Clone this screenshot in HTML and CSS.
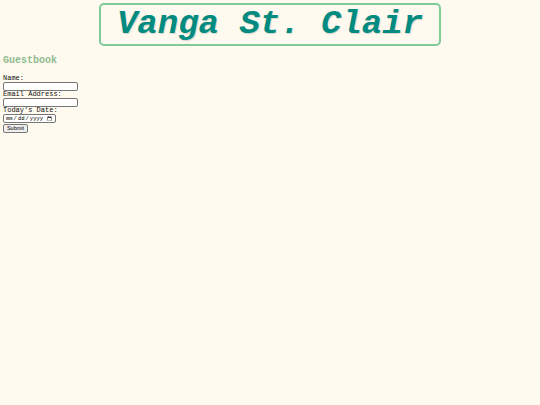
FILE: index.html
```html
<!DOCTYPE html>
<html>
<head>
<meta charset="utf-8">
<link rel="stylesheet" href="styles.css">
</head>
<body>
<header class="banner">
  <h1 class="title">Vanga St. Clair</h1>
</header>
<main class="content">
  <h2 class="heading">Guestbook</h2>
  <form class="form">
    <label class="label" for="name">Name:</label>
    <input class="field" id="name" type="text">
    <label class="label" for="email">Email Address:</label>
    <input class="field" id="email" type="text">
    <label class="label" for="date">Today's Date:</label>
    <input class="date" id="date" type="date">
    <button class="submit" type="submit">Submit</button>
  </form>
</main>
</body>
</html>
```
FILE: styles.css
```css
html, body {
  margin: 0;
  padding: 0;
  background: #fffaf0;
}
body {
  font-family: "Liberation Mono", monospace;
  padding: 3px;
}
.banner {
  display: flex;
  justify-content: center;
}
.title {
  margin: 0;
  width: 338px;
  height: 39px;
  border: 2px solid #7fcb98;
  border-radius: 5px;
  font-family: "Liberation Mono", monospace;
  font-size: 34px;
  font-weight: bold;
  font-style: italic;
  color: #008b80;
  text-shadow: 1px 1px 1px rgba(0,0,0,0.15);
  text-align: center;
  line-height: 39px;
}
.heading {
  margin: 8px 0 7px 0;
  font-size: 10px;
  font-weight: bold;
  color: #8fbc8f;
  line-height: 14px;
}
.form {
  display: flex;
  flex-direction: column;
  align-items: flex-start;
}
.label {
  font-size: 7px;
  line-height: 7px;
  color: #111;
}
.field {
  box-sizing: border-box;
  width: 75px;
  height: 9px;
  margin: 0;
  padding: 0;
  border: 1px solid #767676;
  border-radius: 2px;
  background: #fff;
  font-size: 6px;
}
.date {
  box-sizing: border-box;
  width: 53px;
  height: 9px;
  margin: 0;
  padding: 0 1px;
  border: 1px solid #767676;
  border-radius: 2px;
  background: #fff;
  font-family: "Liberation Mono", monospace;
  font-size: 5.5px;
}
.submit {
  box-sizing: border-box;
  margin: 1px 0 0 0;
  padding: 0;
  width: 25px;
  height: 9px;
  font-family: "Liberation Sans", sans-serif;
  font-size: 5.5px;
  line-height: 7px;
  border: 1px solid #767676;
  border-radius: 2px;
  background: #efefef;
}
```
